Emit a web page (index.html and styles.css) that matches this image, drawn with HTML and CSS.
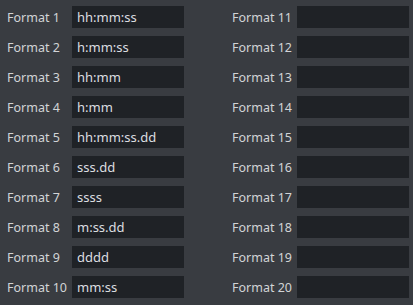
FILE: index.html
```html
<!DOCTYPE html>
<html lang="en">
<head>
  <meta charset="UTF-8" />
  <title>Time Formats</title>
  <link rel="stylesheet" href="styles.css">
</head>
<body>

<div class="formats">
  <!-- left column -->
  <div class="col">
    <div class="row"><label>Format 1</label><input type="text" value="hh:mm:ss"></div>
    <div class="row"><label>Format 2</label><input type="text" value="h:mm:ss"></div>
    <div class="row"><label>Format 3</label><input type="text" value="hh:mm"></div>
    <div class="row"><label>Format 4</label><input type="text" value="h:mm"></div>
    <div class="row"><label>Format 5</label><input type="text" value="hh:mm:ss.dd"></div>
    <div class="row"><label>Format 6</label><input type="text" value="sss.dd"></div>
    <div class="row"><label>Format 7</label><input type="text" value="ssss"></div>
    <div class="row"><label>Format 8</label><input type="text" value="m:ss.dd"></div>
    <div class="row"><label>Format 9</label><input type="text" value="dddd"></div>
    <div class="row"><label>Format 10</label><input type="text" value="mm:ss"></div>
  </div>

  <!-- right column -->
  <div class="col">
    <div class="row"><label>Format 11</label><input type="text"></div>
    <div class="row"><label>Format 12</label><input type="text"></div>
    <div class="row"><label>Format 13</label><input type="text"></div>
    <div class="row"><label>Format 14</label><input type="text"></div>
    <div class="row"><label>Format 15</label><input type="text"></div>
    <div class="row"><label>Format 16</label><input type="text"></div>
    <div class="row"><label>Format 17</label><input type="text"></div>
    <div class="row"><label>Format 18</label><input type="text"></div>
    <div class="row"><label>Format 19</label><input type="text"></div>
    <div class="row"><label>Format 20</label><input type="text"></div>
  </div>
</div>

</body>
</html>
```

FILE: styles.css
```css
body {
  margin: 0;
  padding: 0;
  background: #393c41;
  font-family: 'Noto Sans', sans-serif;
  font-size: 12.5px;
  color: #d2d4d6;
}
.formats {
  display: flex;
  gap: 48px;
  padding: 6px 0 0 7px;
}
.col {
  display: flex;
  flex-direction: column;
  gap: 8px;
}
.row {
  display: flex;
  align-items: center;
  height: 22px;
}
.row label {
  width: 65px;
  flex: none;
  white-space: nowrap;
}
.row input {
  width: 112px;
  height: 22px;
  box-sizing: border-box;
  margin: 0;
  padding: 0 5px;
  border: none;
  outline: none;
  background: #1f2226;
  color: #dcdee0;
  font-family: inherit;
  font-size: 13px;
}
```
